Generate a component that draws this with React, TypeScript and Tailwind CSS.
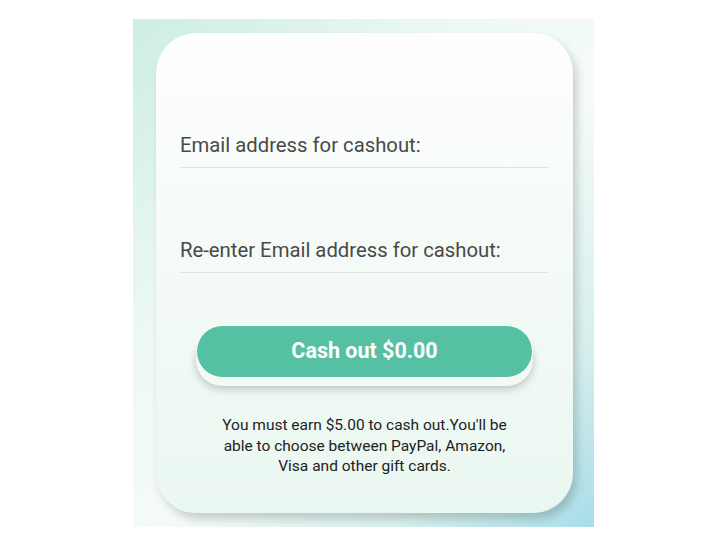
import React from "react";

export default function App() {
  return (
    <div className="w-[728px] h-[552px] bg-white flex items-start" style={{ fontFamily: "Roboto, 'Noto Sans', sans-serif" }}>
      <div className="ml-[133px] mt-[19px] w-[461px] h-[508px] pl-[23px] pr-[21px] py-[14px] bg-[linear-gradient(135deg,#cdeee3_0%,#eef9f4_35%,#f5fbf8_55%,#d8f0ee_80%,#a8dde8_100%)]">
        <div className="w-full h-full rounded-[40px] bg-[linear-gradient(180deg,#fefefe_0%,#f6fbf8_40%,#eaf7f0_100%)] shadow-[4px_6px_10px_rgba(0,0,0,0.18)] px-6 pt-[98px] flex flex-col">
          <div className="border-b border-[#dfe6e3] pb-2">
            <div className="text-[20.3px] leading-[28px] text-[#474a49]">Email address for cashout:</div>
          </div>
          <div className="border-b border-[#dfe6e3] pb-2 mt-[68px]">
            <div className="text-[20.3px] leading-[28px] text-[#474a49]">Re-enter Email address for cashout:</div>
          </div>
          <div className="mx-4 mt-[52px] h-[53px] rounded-full bg-[#56c0a3] border border-white shadow-[0_8px_0_#f3faf6,0_11px_8px_rgba(0,0,0,0.22)] flex items-center justify-center">
            <span className="text-white font-bold text-[21.5px]">Cash out $0.00</span>
          </div>
          <p className="mt-[37px] text-center text-[15.5px] leading-[20.5px] text-[#222] px-[30px]">
            You must earn $5.00 to cash out.You'll be able to choose between PayPal, Amazon, Visa and other gift cards.
          </p>
        </div>
      </div>
    </div>
  );
}
